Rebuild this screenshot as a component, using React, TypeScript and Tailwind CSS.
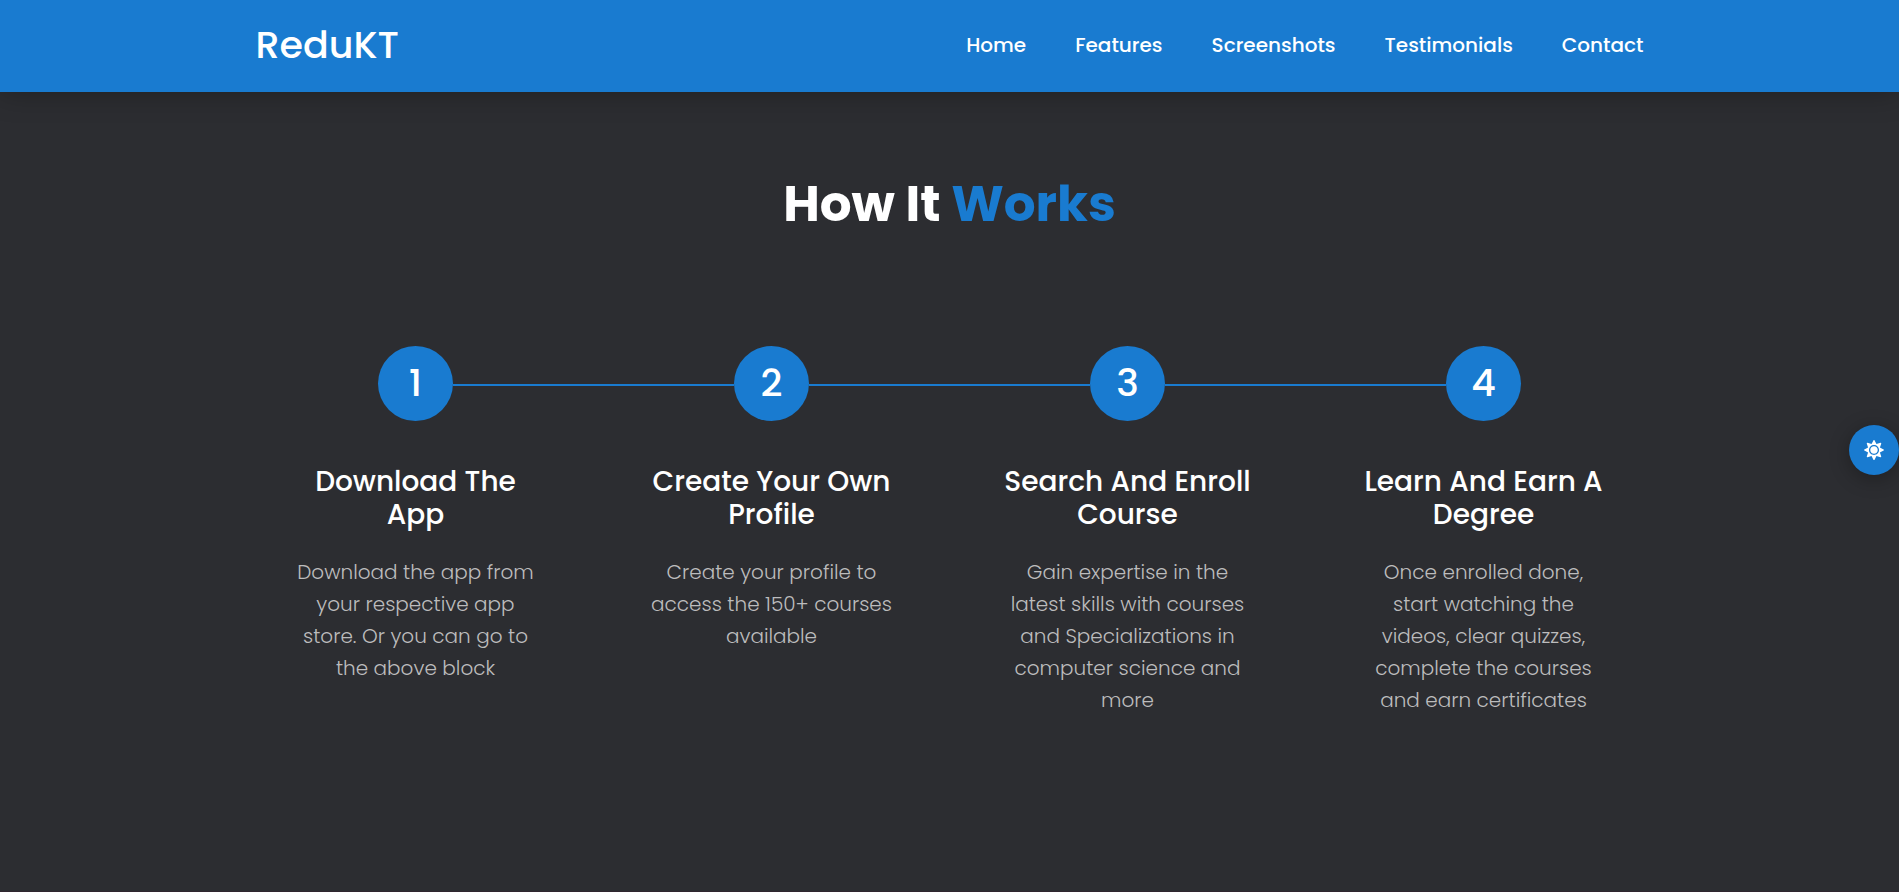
import { FaSun } from "react-icons/fa";

const navItems = ["Home", "Features", "Screenshots", "Testimonials", "Contact"];

const steps = [
  { title: "Download The App", text: "Download the app from your respective app store. Or you can go to the above block" },
  { title: "Create Your Own Profile", text: "Create your profile to access the 150+ courses available" },
  { title: "Search And Enroll Course", text: "Gain expertise in the latest skills with courses and Specializations in computer science and more" },
  { title: "Learn And Earn A Degree", text: "Once enrolled done, start watching the videos, clear quizzes, complete the courses and earn certificates" },
];

function Header() {
  return (
    <header className="relative z-10 bg-[#197bd0] shadow-[0_0_30px_rgba(0,0,0,0.3)]">
      <div className="mx-auto flex min-h-[92px] max-w-[1424px] items-center justify-between px-[18px] pb-[2px]">
        <a href="#home" className="text-[38px] leading-[48px] font-medium text-white">
          ReduKT
        </a>
        <nav aria-label="Main">
          <ul className="flex gap-[49px]">
            {navItems.map((item) => (
              <li key={item}>
                <a href={"#" + item.toLowerCase()} className="text-[20px] leading-[28px] font-medium text-white">
                  {item}
                </a>
              </li>
            ))}
          </ul>
        </nav>
      </div>
    </header>
  );
}

function Step({ index, title, text }: { index: number; title: string; text: string }) {
  return (
    <li className="flex flex-col items-center text-center">
      <div className="flex w-full items-center">
        <span className={index > 0 ? "mt-[2px] h-[2px] flex-1 bg-[#197bd0]" : "h-[2px] flex-1"} />
        <span className="flex size-[75px] items-center justify-center rounded-full bg-[#197bd0] pb-[2px] text-[38px] leading-none font-medium text-white">
          {index + 1}
        </span>
        <span className={index < steps.length - 1 ? "mt-[2px] h-[2px] flex-1 bg-[#197bd0]" : "h-[2px] flex-1"} />
      </div>
      <div className="px-[54px] pt-[44px]">
        <h3 className="text-[28px] leading-[33px] font-medium text-white">{title}</h3>
        <p className="mt-[25px] text-[20px] leading-[32px] font-light text-[#bcbcbd]">{text}</p>
      </div>
    </li>
  );
}

export default function App() {
  return (
    <div className="flex min-h-screen flex-col bg-[#2c2d31] font-['Poppins','Inter',sans-serif]">
      <Header />
      <main className="flex-1 border-b border-[#30262f] pt-[80px]">
        <section id="how-it-works" className="mx-auto max-w-[1424px]">
          <h2 className="text-center text-[50px] leading-[64px] font-bold text-white">
            How It <span className="text-[#197bd0]">Works</span>
          </h2>
          <ol className="grid grid-cols-4 pt-[110px]">
            {steps.map((step, index) => (
              <Step key={step.title} index={index} title={step.title} text={step.text} />
            ))}
          </ol>
        </section>
      </main>
      <button
        type="button"
        aria-label="Toggle theme"
        className="fixed top-[425px] right-0 z-20 flex size-[50px] items-center justify-center rounded-full bg-[#197bd0] text-[20px] text-white shadow-[0_4px_20px_rgba(0,0,0,0.3)]"
      >
        <FaSun />
      </button>
    </div>
  );
}
